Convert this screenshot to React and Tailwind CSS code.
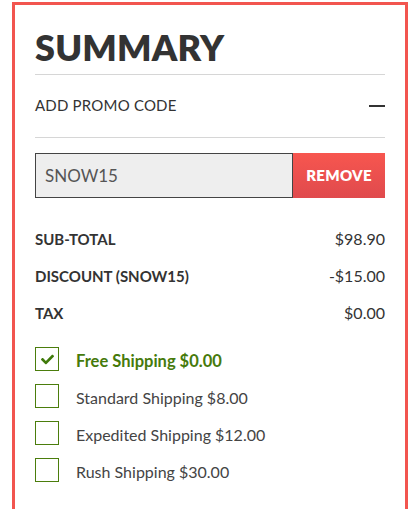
import { FaCheck } from "react-icons/fa";

const rows = [
  { label: "SUB-TOTAL", value: "$98.90" },
  { label: "DISCOUNT (SNOW15)", value: "-$15.00" },
  { label: "TAX", value: "$0.00" },
];

const shipping = [
  { label: "Free Shipping $0.00", checked: true },
  { label: "Standard Shipping $8.00" },
  { label: "Expedited Shipping $12.00" },
  { label: "Rush Shipping $30.00" },
];

export default function App() {
  return (
    <div className="min-h-screen bg-white pt-[2px] pl-[12px] pr-[10px] font-['Lato','Liberation_Sans',sans-serif] text-[#333]">
      <div className="border-[3px] border-b-0 border-[#f2554f] px-[20px] pt-[20px] pb-[30px] h-[520px]">
        {/* Heading */}
        <h1 className="text-[36px] leading-[44px] font-extrabold tracking-[0.2px] text-[#333]">SUMMARY</h1>

        <div className="mt-[5px] border-t border-[#d6d6d6]" />

        {/* Promo toggle */}
        <div className="flex items-center justify-between h-[62px]">
          <span className="text-[15px] tracking-[0.2px] pb-[2px]">ADD PROMO CODE</span>
          <span className="block w-[16px] h-[2px] bg-[#333]" />
        </div>

        <div className="border-t border-[#d6d6d6]" />

        {/* Promo input */}
        <div className="flex mt-[15px] h-[45px]">
          <div className="flex-1 flex items-center border border-[#444] bg-[#eeeeee] px-[9px] text-[17px] text-[#555]">
            SNOW15
          </div>
          <button className="w-[92px] bg-gradient-to-b from-[#f7564f] to-[#e04a4d] text-white font-extrabold text-[15px] tracking-[0.3px]">
            REMOVE
          </button>
        </div>

        {/* Totals */}
        <div className="mt-[31px] flex flex-col gap-[17px]">
          {rows.map((r) => (
            <div key={r.label} className="flex items-center justify-between h-[20px] text-[15px]">
              <span className="font-bold">{r.label}</span>
              <span className="text-[16px]">{r.value}</span>
            </div>
          ))}
        </div>

        {/* Shipping */}
        <div className="mt-[24px] flex flex-col gap-[13px]">
          {shipping.map((s) => (
            <label key={s.label} className="flex items-center gap-[17px] h-[24px]">
              <span className="w-[24px] h-[24px] border-[1.5px] border-[#4b7d0c] flex items-center justify-center">
                {s.checked && <FaCheck className="w-[13px] h-[13px] text-[#3f7a0a]" />}
              </span>
              <span className={s.checked ? "text-[16.5px] font-bold text-[#467a0b] translate-y-[2px]" : "text-[16px] text-[#444] translate-y-[2px]"}>
                {s.label}
              </span>
            </label>
          ))}
        </div>
      </div>
    </div>
  );
}
